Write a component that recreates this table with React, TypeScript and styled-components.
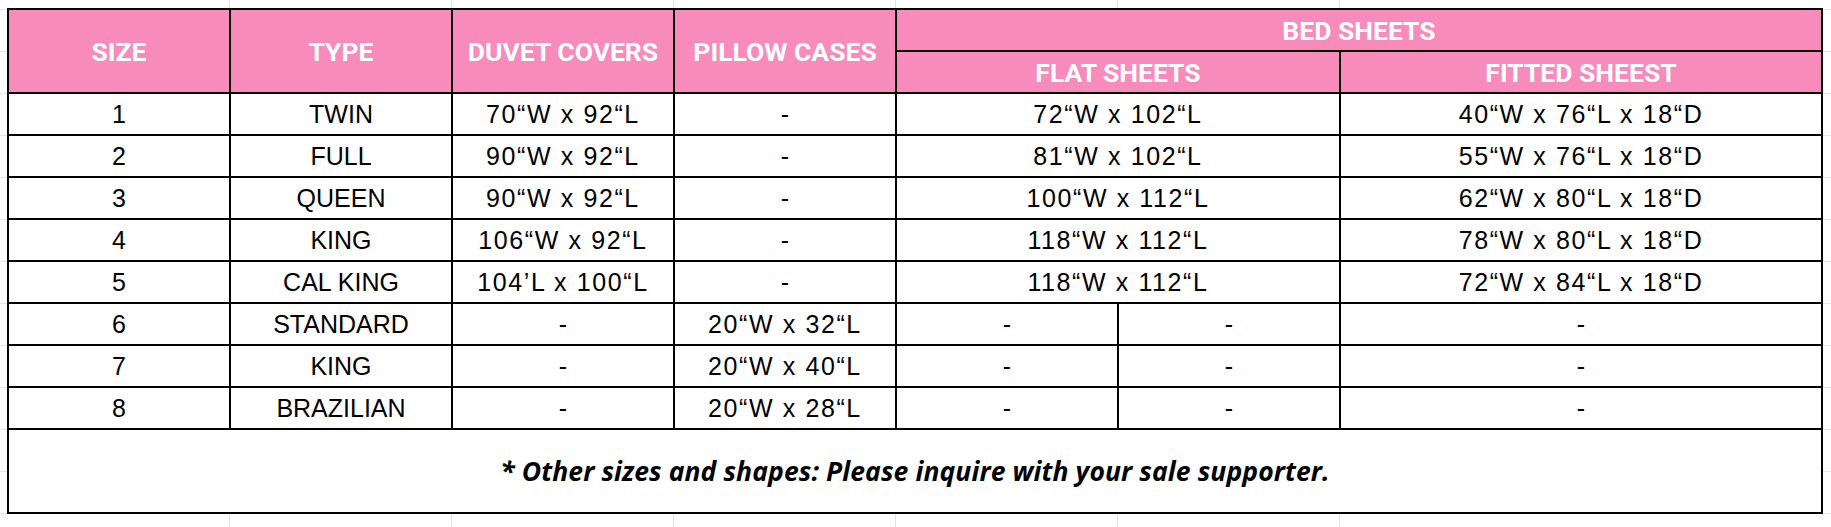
import React from "react";
import styled, { createGlobalStyle } from "styled-components";

const GlobalStyle = createGlobalStyle`
  html, body {
    margin: 0;
    padding: 0;
  }
  body {
    width: 1831px;
    height: 527px;
    overflow: hidden;
    background-color: #ffffff;
    background-image:
      repeating-linear-gradient(to bottom, #e3e3e3 0 1px, transparent 1px 42px),
      repeating-linear-gradient(to right, #e3e3e3 0 1px, transparent 1px 222px);
    background-position: 0 9px, 229px 0;
    background-size: 1831px 527px, 1112px 527px;
    background-repeat: no-repeat;
  }
`;

const Page = styled.div`
  padding: 8px 0 0 7px;
`;

const Grid = styled.div`
  display: inline-grid;
  grid-template-columns: repeat(6, 220px) 480px;
  grid-template-rows: repeat(10, 40px) 82px;
  gap: 2px;
  padding: 2px;
  background: #000000;
`;

const HeadCell = styled.div<{ $col?: string; $row?: string }>`
  grid-column: ${(p) => p.$col ?? "auto"};
  grid-row: ${(p) => p.$row ?? "auto"};
  background: #f78bbb;
  color: #ffffff;
  display: flex;
  align-items: center;
  justify-content: center;
  font-family: Roboto, "Liberation Sans", Arial, sans-serif;
  font-weight: 700;
  font-size: 26.5px;
  white-space: nowrap;
`;

const Cell = styled.div<{ $col?: string; $numeric?: boolean }>`
  grid-column: ${(p) => p.$col ?? "auto"};
  background: #ffffff;
  color: #000000;
  display: flex;
  align-items: center;
  justify-content: center;
  font-family: "Liberation Sans", Arial, sans-serif;
  font-size: 25px;
  letter-spacing: ${(p) => (p.$numeric ? "1.6px" : "0")};
  white-space: nowrap;
`;

const FooterCell = styled.div`
  grid-column: 1 / -1;
  background: #ffffff;
  color: #000000;
  display: flex;
  align-items: center;
  justify-content: center;
  font-family: "Open Sans", sans-serif;
  font-weight: 700;
  font-style: italic;
  font-size: 26.5px;
  letter-spacing: 0.1px;
  white-space: nowrap;
`;

type Row = {
  size: string;
  type: string;
  duvet: string;
  pillow: string;
  flat: string;
  fitted: string;
  split?: boolean;
};

const rows: Row[] = [
  { size: "1", type: "TWIN", duvet: "70“W x 92“L", pillow: "-", flat: "72“W x 102“L", fitted: "40“W x 76“L x 18“D" },
  { size: "2", type: "FULL", duvet: "90“W x 92“L", pillow: "-", flat: "81“W x 102“L", fitted: "55“W x 76“L x 18“D" },
  { size: "3", type: "QUEEN", duvet: "90“W x 92“L", pillow: "-", flat: "100“W x 112“L", fitted: "62“W x 80“L x 18“D" },
  { size: "4", type: "KING", duvet: "106“W x 92“L", pillow: "-", flat: "118“W x 112“L", fitted: "78“W x 80“L x 18“D" },
  { size: "5", type: "CAL KING", duvet: "104’L x 100“L", pillow: "-", flat: "118“W x 112“L", fitted: "72“W x 84“L x 18“D" },
  { size: "6", type: "STANDARD", duvet: "-", pillow: "20“W x 32“L", flat: "-", fitted: "-", split: true },
  { size: "7", type: "KING", duvet: "-", pillow: "20“W x 40“L", flat: "-", fitted: "-", split: true },
  { size: "8", type: "BRAZILIAN", duvet: "-", pillow: "20“W x 28“L", flat: "-", fitted: "-", split: true },
];

const isNum = (s: string) => /\d/.test(s) && s.length > 2;

export default function App() {
  return (
    <>
      <GlobalStyle />
      <Page>
        <Grid>
          <HeadCell $row="1 / 3">SIZE</HeadCell>
          <HeadCell $row="1 / 3">TYPE</HeadCell>
          <HeadCell $row="1 / 3">DUVET COVERS</HeadCell>
          <HeadCell $row="1 / 3">PILLOW CASES</HeadCell>
          <HeadCell $col="5 / 8" $row="1">BED SHEETS</HeadCell>
          <HeadCell $col="5 / 7" $row="2">FLAT SHEETS</HeadCell>
          <HeadCell $col="7" $row="2">FITTED SHEEST</HeadCell>
          {rows.map((r) => (
            <React.Fragment key={r.size}>
              <Cell>{r.size}</Cell>
              <Cell>{r.type}</Cell>
              <Cell $numeric={isNum(r.duvet)}>{r.duvet}</Cell>
              <Cell $numeric={isNum(r.pillow)}>{r.pillow}</Cell>
              {r.split ? (
                <>
                  <Cell>-</Cell>
                  <Cell>-</Cell>
                </>
              ) : (
                <Cell $col="span 2" $numeric>
                  {r.flat}
                </Cell>
              )}
              <Cell $numeric={isNum(r.fitted)}>{r.fitted}</Cell>
            </React.Fragment>
          ))}
          <FooterCell>* Other sizes and shapes: Please inquire with your sale supporter.</FooterCell>
        </Grid>
      </Page>
    </>
  );
}
